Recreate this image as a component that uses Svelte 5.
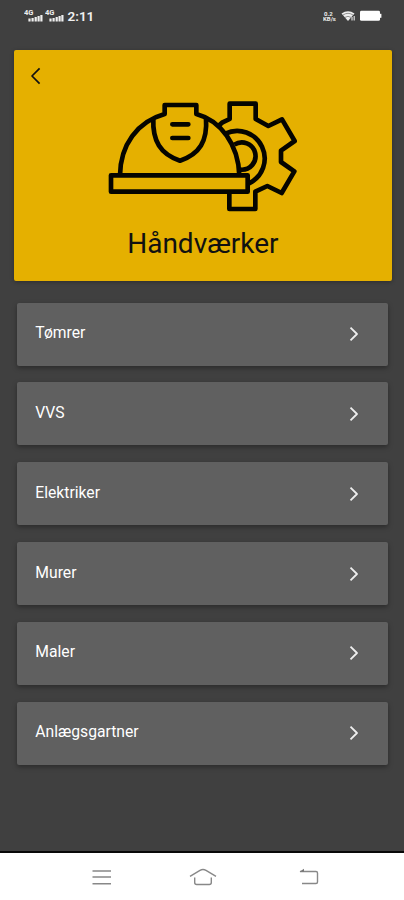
<script lang="ts">
  const title = 'Håndværker';
  const trades: string[] = ['Tømrer', 'VVS', 'Elektriker', 'Murer', 'Maler', 'Anlægsgartner'];
</script>

<div class="screen">
  <header class="status">
    <div class="status-left">
      {#each [0, 1] as sim (sim)}
        <svg class="signal" viewBox="0 0 20 16">
          <text x="0" y="7.4">4G</text>
          <path d="M5.5 13.5v-3M8.6 13.5v-3.6M11.7 13.5v-4.5M14.6 13.5v-5.5M17.4 13.5v-6.5" />
        </svg>
      {/each}
      <span class="clock">2:11</span>
    </div>
    <div class="status-right">
      <svg class="rate" viewBox="0 0 14 13">
        <text x="1" y="5.6">0.2</text>
        <text x="0" y="11.2">KB/s</text>
      </svg>
      <svg class="wifi" viewBox="0 0 15 12">
        <path class="fan" d="M.5 3.6Q7 -1.2 13.5 3.6L7 11Z" />
        <path class="arc" d="M2 5Q7 1.6 12 5M4 7.4Q7 5.2 10 7.4" />
        <path class="activity" d="M11 10.5V7M13.2 10.5V6" />
      </svg>
      <svg class="battery" viewBox="0 0 22 11">
        <rect x="0" y="0.8" width="20" height="10" rx="1.4" />
        <rect x="20" y="3.8" width="1.4" height="4" />
      </svg>
    </div>
  </header>

  <section class="hero">
    <button class="back" aria-label="Tilbage">
      <svg viewBox="0 0 12 18"><path d="M9.6 1.3 2 9l7.6 7.7" /></svg>
    </button>
    <svg class="helmet" viewBox="0 0 630 390">
      <!-- gear -->
      <path d="M355 108L366 98L389 87V41H467V87L505 108L546 88L584 153L543 182V216L583 244L545 309L502 288L466 305V357H388V307" />
      <path d="M376 131A82 82 0 1 1 447 280" />
      <path d="M403 164A41 41 0 1 1 421 239" />
      <!-- helmet -->
      <path d="M60 256C61 164 112 95 194 72V45H289V72C363 92 415 164 418 256" />
      <path d="M160 84C157 153 181 192 240 212C299 192 323 153 318 84" />
      <path class="round" d="M217 103H265M217 144H265" />
      <path d="M33 256H443V305H33Z" />
    </svg>
    <h1>{title}</h1>
  </section>

  <main class="list">
    {#each trades as trade (trade)}
      <button class="item">
        <span>{trade}</span>
        <svg class="chevron" viewBox="0 0 10 16"><path d="M1.5 1.6 8 8l-6.5 6.4" /></svg>
      </button>
    {/each}
  </main>

  <nav class="navbar">
    <svg class="menu" viewBox="0 0 20 18"><path d="M.5 3h18.5M.5 9h18.5M.5 15.7h18.5" /></svg>
    <svg class="home" viewBox="0 0 28 18">
      <path d="M1 8.3 11 2.3Q14 .8 17 2.3L27 8.3" />
      <path d="M5.7 9.5V14.5Q5.7 16.5 7.7 16.5H20.3Q22.3 16.5 22.3 14.5V9.5" />
    </svg>
    <svg class="return" viewBox="0 0 20 18">
      <path d="M1 3.5H17Q18.5 3.5 18.5 5V14Q18.5 15.5 17 15.5H3" />
      <path class="head" d="M.5 3.8 5 .8v3Z" />
    </svg>
  </nav>
</div>

<style>
  :global(body) {
    margin: 0;
    background: #404040;
  }

  .screen {
    display: flex;
    flex-direction: column;
    box-sizing: border-box;
    width: 404px;
    height: 900px;
    overflow: hidden;
    background: #404040;
    color: #fff;
    font-family: Roboto, 'Liberation Sans', sans-serif;
  }

  svg {
    display: block;
    flex: none;
    fill: none;
    stroke-linejoin: round;
  }

  button {
    border: 0;
    font: inherit;
    color: inherit;
    cursor: pointer;
  }

  .status {
    display: flex;
    justify-content: space-between;
    box-sizing: border-box;
    height: 50px;
    padding: 8px 22px 0 23.5px;
  }

  .status-left {
    display: flex;
    align-items: flex-start;
    height: 16px;
  }

  .signal {
    width: 20px;
    height: 16px;
    margin-right: 1.5px;
    stroke: #eee;
    stroke-width: 2.2;
  }

  .signal text,
  .rate text {
    fill: #eee;
    stroke: none;
    font-size: 7.5px;
    font-weight: 700;
  }

  .clock {
    margin-left: 1px;
    font-size: 13.5px;
    font-weight: 600;
    line-height: 17px;
    color: #f0f0f0;
  }

  .status-right {
    display: flex;
    gap: 4px;
    align-items: flex-start;
    padding-top: 2px;
  }

  .rate {
    width: 14px;
    height: 13px;
  }

  .rate text {
    font-size: 6px;
  }

  .wifi {
    width: 15px;
    height: 12px;
  }

  .wifi .fan {
    fill: #eee;
  }

  .wifi .arc {
    stroke: #777;
    stroke-width: 0.8;
  }

  .wifi .activity {
    stroke: #ddd;
    stroke-width: 1.2;
  }

  .battery {
    width: 22px;
    height: 11px;
    fill: #fff;
  }

  .hero {
    display: flex;
    flex-direction: column;
    align-items: center;
    box-sizing: border-box;
    width: 378px;
    height: 231px;
    margin: 0 0 0 13.6px;
    border-radius: 2px;
    background: #e5b000;
    color: #111;
    box-shadow: 0 1px 4px rgba(0, 0, 0, 0.3);
  }

  .back {
    align-self: flex-start;
    margin: 17px 0 0 16.6px;
    padding: 0;
    background: none;
  }

  .back svg {
    width: 12px;
    height: 18px;
    stroke: #111;
    stroke-width: 1.7;
  }

  .helmet {
    width: 210px;
    height: 130px;
    margin: 5px 0 0 4.8px;
    stroke: #050500;
    stroke-width: 14;
  }

  .helmet .round {
    stroke-linecap: round;
  }

  h1 {
    margin: 7px 0 0 0.6px;
    font-size: 28px;
    font-weight: 400;
    line-height: 34px;
  }

  .list {
    display: flex;
    flex: 1;
    flex-direction: column;
    gap: 16.8px;
    padding: 21.7px 16px 0 17px;
  }

  .item {
    display: flex;
    justify-content: space-between;
    box-sizing: border-box;
    height: 63px;
    padding: 20.45px 29px 0 18.3px;
    border-radius: 2px;
    background: #606060;
    box-shadow: 0 2px 5px rgba(0, 0, 0, 0.35);
    font-size: 15.7px;
    line-height: 20px;
    text-align: left;
  }

  .chevron {
    width: 10px;
    height: 16px;
    margin-top: 3px;
    stroke: #eee;
    stroke-width: 1.8;
  }

  .navbar {
    display: flex;
    gap: 77px;
    box-sizing: border-box;
    height: 49px;
    padding: 15px 0 0 92px;
    border-top: 2px solid #080808;
    background: #fff;
    stroke: #888;
    stroke-width: 1.4;
  }

  .menu,
  .return {
    width: 20px;
    height: 18px;
  }

  .home {
    width: 28px;
    height: 18px;
  }

  .return {
    margin-left: 5px;
  }

  .return .head {
    fill: #777;
    stroke: none;
  }
</style>
